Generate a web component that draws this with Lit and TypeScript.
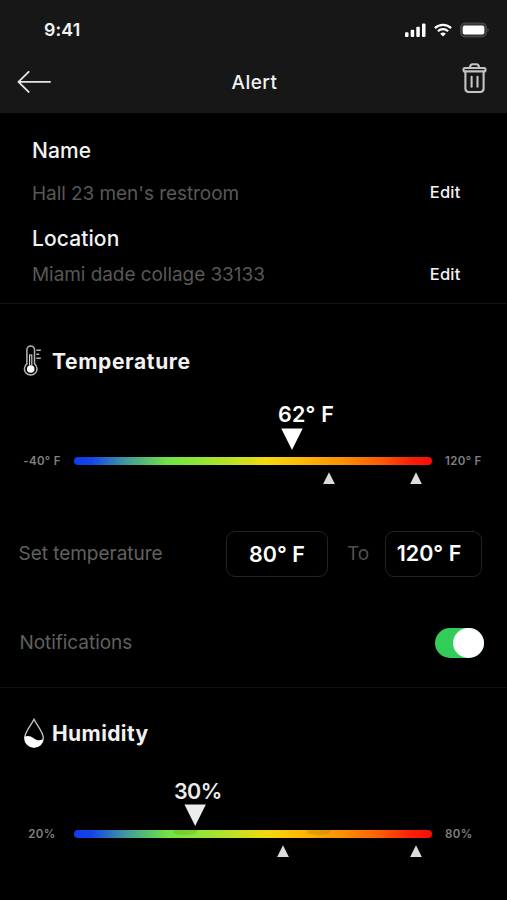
import { LitElement, html, css, svg } from "lit";
import { customElement, property } from "lit/decorators.js";

@customElement("range-gauge")
class RangeGauge extends LitElement {
  @property() low = "";
  @property() high = "";
  @property() reading = "";
  @property({ type: Number }) value = 0;
  @property({ type: Number }) shift = 0;
  @property({ type: Boolean }) soft = false;
  @property({ attribute: false }) limits: number[] = [];
  @property({ attribute: false }) shades: number[] = [];

  static styles = css`
    :host { display: flex; align-items: center; height: 24px; }
    .end { box-sizing: border-box; font-size: 11.5px; font-weight: 600; line-height: 16px; letter-spacing: 0.35px; color: #808080; white-space: pre; }
    .low { width: 74px; text-align: center; padding-left: 10px; }
    .high { padding-left: 13.5px; }
    .track { position: relative; width: 357.5px; height: 8px; border-radius: 4px; flex: none;
      background: linear-gradient(90deg, #0b3cf0 0%, #1545e6 5%, #3f96a0 14%, #6fe444 26%, #8fe636 35%, #c8e022 46%, #f4d80f 54%, #fdbb05 63%, #fe8f02 75%, #fd5a02 86%, #f9200a 94%, #f90d03 100%); }
    .reading { position: absolute; bottom: 15px; transform: translateX(-50%); display: flex; flex-direction: column; align-items: center; gap: 1px; color: #fff; }
    .num { font-size: 21.5px; font-weight: 600; line-height: 26px; letter-spacing: 0.2px; white-space: nowrap; }
    .soft { color: #ececec; bottom: 12px; gap: 0; }
    .soft .num { letter-spacing: -0.6px; }
    .limit { position: absolute; top: 14.5px; transform: translateX(-50%); fill: #dcdcdc; }
    .shade { position: absolute; top: 0; width: 23px; height: 4.5px; transform: translateX(-50%); border-radius: 0 0 50% 50%; background: rgba(70, 90, 0, 0.15); }
    svg { display: block; }
  `;

  render() {
    return html`
      <span class="end low">${this.low}</span>
      <div class="track">
        ${this.shades.map((s) => html`<i class="shade" style="left:${s}%"></i>`)}
        <div class="reading ${this.soft ? "soft" : ""}" style="left:${this.value}%">
          <span class="num" style="transform:translateX(${this.shift}px)">${this.reading}</span>
          <svg width="22" height="22" viewBox="0 0 22 22"><path d="M.3.6h21.4L11 22z" fill="currentColor" /></svg>
        </div>
        ${this.limits.map(
          (l) => html`<svg class="limit" style="left:${l}%" width="12" height="12" viewBox="0 0 12 12"><path d="M6 .3 11.9 12H.1z" /></svg>`
        )}
      </div>
      <span class="end high">${this.high}</span>
    `;
  }
}

const signal = svg`<rect x="0" y="9.2" width="3.5" height="4.8" rx="1"/><rect x="5.7" y="6.8" width="3.5" height="7.2" rx="1"/><rect x="11.3" y="3.8" width="3.5" height="10.2" rx="1"/><rect x="17" y=".6" width="3.5" height="13.4" rx="1"/>`;

@customElement("app-root")
class AppRoot extends LitElement {
  static styles = css`
    :host { display: block; width: 507px; height: 900px; overflow: hidden; background: #000; color: #f2f2f2; font-family: Inter, "Liberation Sans", sans-serif; }
    svg { display: block; flex: none; }
    header { height: 113px; background: #171717; }
    .status { height: 60px; display: flex; align-items: center; padding: 0 18.5px 0 44px; }
    .clock { flex: 1; font-size: 17.8px; font-weight: 600; line-height: 20px; letter-spacing: 0.15px; }
    .signs { display: flex; align-items: center; gap: 7px; color: #fff; }
    .signs .bars { margin-right: 1px; }
    .signs .wifi { margin-right: 1px; }
    .nav { height: 45px; display: grid; grid-template-columns: 1fr auto 1fr; align-items: center; padding: 0 19px 0 17px; }
    .nav h1 { margin: 0 -1px 0 3px; font-size: 19px; font-weight: 500; line-height: 24px; letter-spacing: 0.45px; padding-top: 1px; }
    .trash { justify-self: end; margin-top: -7px; }
    .info { padding: 27px 46.5px 18px 32px; border-bottom: 1px solid #121212; }
    .label { font-size: 21px; font-weight: 500; line-height: 21px; letter-spacing: 0.1px; height: 21px; }
    .label.down { position: relative; top: 1px; }
    .row { display: flex; justify-content: space-between; align-items: center; height: 21px; }
    .first { margin: 21px 0 24px; }
    .second { margin-top: 16px; }
    .value { font-size: 19px; line-height: 21px; color: #585858; letter-spacing: -0.06px; white-space: nowrap; }
    .first .value { padding-top: 1px; }
    .edit { font-size: 16.5px; font-weight: 500; line-height: 20px; letter-spacing: 0.2px; margin-top: -2px; }
    .temp { padding-top: 42px; height: 341px; border-bottom: 1px solid #111; }
    .title { display: flex; align-items: center; height: 30px; padding-left: 23px; font-size: 21px; font-weight: 650; }
    .title h2 { margin: 0 0 0 8px; font-size: inherit; font-weight: inherit; line-height: 30px; letter-spacing: 0.65px; padding-top: 1px; }
    .hum .title h2 { letter-spacing: 0.4px; }
    .temp range-gauge { margin-top: 73px; }
    .set { display: flex; align-items: center; height: 46px; margin-top: 58px; padding-left: 18.5px; }
    .muted { font-size: 19px; line-height: 24px; color: #606060; white-space: nowrap; letter-spacing: -0.03px; }
    .set .name { width: 207.5px; }
    .box { box-sizing: border-box; height: 46px; border: 1.5px solid #232323; border-radius: 9px; font-size: 21.5px; font-weight: 600; line-height: 43px; text-align: center; white-space: nowrap; color: #fff; }
    .from { width: 102px; padding-top: 1px; }
    .upto { width: 97px; padding-right: 9px; }
    .to { width: 57px; text-align: center; box-sizing: border-box; padding-left: 3px; color: #505050; }
    .notify { display: flex; justify-content: space-between; align-items: center; height: 32px; margin-top: 50px; padding: 0 23px 0 19.5px; }
    .notify .muted { letter-spacing: -0.05px; }
    .switch { display: flex; justify-content: flex-end; width: 49px; height: 30.5px; border-radius: 16px; background: #32cd58; }
    .knob { width: 31.5px; height: 30.5px; border-radius: 50%; background: #fff; }
    .hum { padding-top: 30px; }
    .hum range-gauge { margin-top: 74px; }
  `;

  render() {
    return html`
      <header>
        <div class="status">
          <span class="clock">9:41</span>
          <div class="signs">
            <svg class="bars" width="21" height="14" viewBox="0 0 21 14" fill="currentColor">${signal}</svg>
            <svg class="wifi" width="18" height="14" viewBox="0 0 18 14" fill="none" stroke="currentColor" stroke-width="2.2">
              <path d="M.9 5.1a11.6 11.6 0 0 1 16.2 0M3.9 8.2a7.3 7.3 0 0 1 10.2 0" />
              <path d="M9 13.6 6.2 10.8a4 4 0 0 1 5.6 0z" fill="currentColor" stroke="none" />
            </svg>
            <svg width="29" height="16" viewBox="0 0 29 16">
              <rect x=".8" y="1.3" width="25.4" height="13.4" rx="4" fill="#333" stroke="#444" stroke-width="1.6" />
              <rect x="2.7" y="3.4" width="21.6" height="9.2" rx="2" fill="#fff" />
              <path d="M27.3 6v4q1.5-.6 1.5-2t-1.5-2z" fill="#444" />
            </svg>
          </div>
        </div>
        <div class="nav">
          <svg width="34" height="24" viewBox="0 0 34 24" fill="none" stroke="#e4e4e4" stroke-width="1.9" stroke-linecap="round" stroke-linejoin="round">
            <path d="M33 10.9H1.6M11.6.9 1.5 10.9 11.6 20.9" />
          </svg>
          <h1>Alert</h1>
          <svg class="trash" width="26" height="32" viewBox="0 0 26 32" fill="none" stroke="#c4c4c4" stroke-width="2.1" stroke-linecap="round">
            <rect x="1.5" y="5" width="22" height="3.4" rx="1.5" />
            <path d="M7.8 4.8Q8.3 1.300 10.500 1.300h4q2.200 0 2.700 3.500M3.400 8.600v17q0 3.400 3.400 3.400h11.400q3.400 0 3.400-3.400V8.600M9.600 13.700v10M15.500 13.700v10" />
          </svg>
        </div>
      </header>
      <section class="info">
        <div class="label">Name</div>
        <div class="row first"><span class="value">Hall 23 men's restroom</span><span class="edit">Edit</span></div>
        <div class="label down">Location</div>
        <div class="row second"><span class="value">Miami dade collage 33133</span><span class="edit">Edit</span></div>
      </section>
      <section class="temp">
        <div class="title">
          <svg width="21" height="32" viewBox="0 0 21 32" fill="none" stroke="#b4b4b4" stroke-width="1.5">
            <path d="M3.9 18.8V4.7a3.8 3.8 0 0 1 7.6 0v14.1a6.3 6.3 0 1 1-7.600 0z" />
            <path d="M6.600 20.500V10h2.200v10.500" stroke="#ddd" stroke-width="1.100" />
            <circle cx="7.700" cy="24" r="3.800" fill="#fff" stroke="none" />
            <path d="M13.300 5.200h4.500M13.300 9.200h3M13.300 13.200h4.500" stroke-width="1.400" />
          </svg>
          <h2>Temperature</h2>
        </div>
        <range-gauge low="-40° F" high="120° F" reading="62° F" .value=${61} .shift=${14} .limits=${[71.2, 95.6]}></range-gauge>
        <div class="set">
          <span class="muted name">Set temperature</span>
          <span class="box from">80° F</span>
          <span class="muted to">To</span>
          <span class="box upto">120° F</span>
        </div>
        <div class="notify">
          <span class="muted">Notifications</span>
          <span class="switch"><i class="knob"></i></span>
        </div>
      </section>
      <section class="hum">
        <div class="title">
          <svg width="21" height="30" viewBox="0 0 21 30">
            <path d="M11 1.2C9 6 1.7 13.6 1.7 20a9.300 9.100 0 0 0 18.600 0C20.300 13.600 13 6 11 1.200z" fill="none" stroke="#c8c8c8" stroke-width="1.300" />
            <path d="M1.600 18.700c3.200-1.500 6-.8 9 1.600s6.400 2.700 9.700.6A9.300 9 0 0 1 1.600 20z" fill="#fff" />
          </svg>
          <h2>Humidity</h2>
        </div>
        <range-gauge low="20%" high="80%" reading="30%" soft .value=${33.8} .shift=${3} .limits=${[58.6, 95.6]} .shades=${[31, 68.5]}></range-gauge>
      </section>
    `;
  }
}
